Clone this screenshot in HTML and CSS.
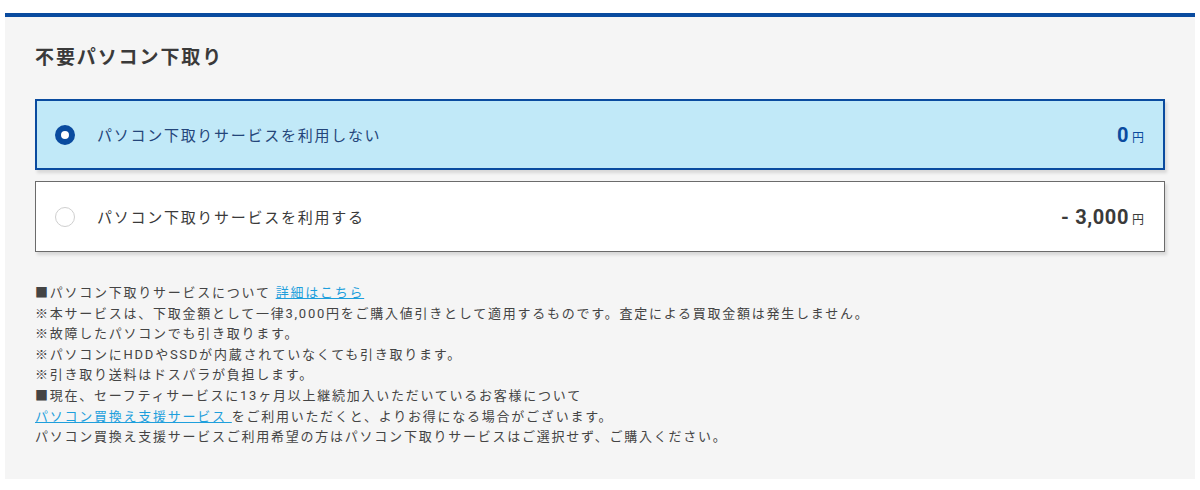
FILE: index.html
```
<!DOCTYPE html>
<html lang="ja">
<head>
  <meta charset="UTF-8">
  <meta name="viewport" content="width=device-width, initial-scale=1.0">
  <title>不要パソコン下取り</title>
  <link rel="stylesheet" href="styles.css">
</head>
<body>
  <section class="shitadori">
    <h2 class="shitadori-title">不要パソコン下取り</h2>

    <div class="opciones">
      <label class="opcion opcion-activa">
        <span class="radio radio-on"></span>
        <span class="opcion-texto">パソコン下取りサービスを利用しない</span>
        <span class="precio"><b>0</b><small>円</small></span>
      </label>
      <label class="opcion">
        <span class="radio"></span>
        <span class="opcion-texto">パソコン下取りサービスを利用する</span>
        <span class="precio"><b>- 3,000</b><small>円</small></span>
      </label>
    </div>

    <div class="notas">
      <p>■パソコン下取りサービスについて <a href="#">詳細はこちら</a></p>
      <p>※本サービスは、下取金額として一律3,000円をご購入値引きとして適用するものです。査定による買取金額は発生しません。</p>
      <p>※故障したパソコンでも引き取ります。</p>
      <p>※パソコンにHDDやSSDが内蔵されていなくても引き取ります。</p>
      <p>※引き取り送料はドスパラが負担します。</p>
      <p>■現在、セーフティサービスに13ヶ月以上継続加入いただいているお客様について</p>
      <p><a href="#">パソコン買換え支援サービス </a>をご利用いただくと、よりお得になる場合がございます。</p>
      <p>パソコン買換え支援サービスご利用希望の方はパソコン下取りサービスはご選択せず、ご購入ください。</p>
    </div>
  </section>
</body>
</html>
```

FILE: styles.css
```
:root {
  --azul: #0a4b9f;
  --celeste: #c1e9f8;
  --gris-fondo: #f5f5f5;
  --texto: #333333;
  --enlace: #1e9fdc;
}

body {
  margin: 0;
  padding: 13px 5px 0;
  background: #ffffff;
  font-family: Roboto, "Noto Sans CJK JP", sans-serif;
  color: var(--texto);
}

.shitadori {
  background: var(--gris-fondo);
  border-top: 4px solid var(--azul);
  padding: 28px 30px 31px;
}

.shitadori-title {
  margin: 0 0 28px;
  font-size: 19px;
  line-height: 26px;
  letter-spacing: 0.1em;
  font-weight: bold;
  color: #3a3a3a;
}

.opciones {
  display: flex;
  flex-direction: column;
  gap: 11px;
}

.opcion {
  display: flex;
  align-items: center;
  box-sizing: border-box;
  height: 71px;
  padding: 0 20px 0 19px;
  background: #ffffff;
  border: 1px solid #6b6b6b;
  box-shadow: 2px 3px 3px rgba(0, 0, 0, 0.12);
  cursor: pointer;
}

.opcion-activa {
  background: var(--celeste);
  border: 2px solid var(--azul);
  padding: 0 19px 0 18px;
}

.radio {
  width: 20px;
  height: 20px;
  box-sizing: border-box;
  border-radius: 50%;
  border: 1.5px solid #cfcfcf;
  background: #fff;
  flex-shrink: 0;
}

.radio-on {
  border: 6px solid var(--azul);
  background: #fff;
}

.opcion-texto {
  margin-left: 22px;
  font-size: 15px;
  letter-spacing: 0.115em;
  flex: 1;
  color: #3a3a3a;
}

.opcion-activa .opcion-texto {
  color: #24457a;
}

.precio {
  color: #3a3a3a;
}

.precio b {
  font-size: 20px;
  font-weight: bold;
  letter-spacing: 0.03em;
}

.precio small {
  font-size: 12px;
  margin-left: 3px;
}

.opcion-activa .precio {
  color: var(--azul);
}

.notas {
  margin-top: 31px;
  font-size: 13px;
  line-height: 20.6px;
  letter-spacing: 0.135em;
  color: #444;
}

.notas p {
  margin: 0;
}

.notas a {
  color: var(--enlace);
  text-decoration: underline;
}
```
